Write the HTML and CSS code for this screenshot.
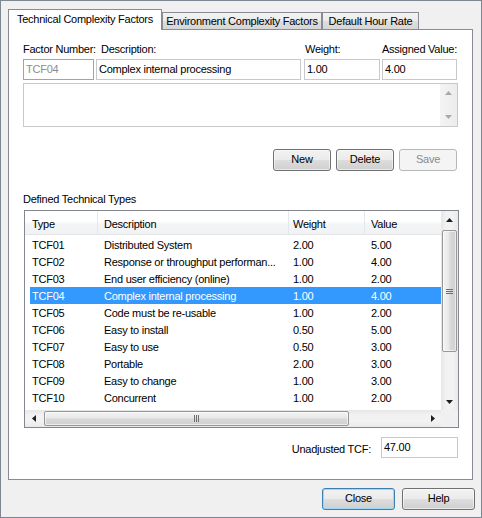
FILE: index.html
```html
<!DOCTYPE html>
<html>
<head>
<meta charset="utf-8">
<link rel="stylesheet" href="styles.css">
</head>
<body>
<div class="window">
  <div class="tabs">
    <div class="tab active">Technical Complexity Factors</div>
    <div class="tab env">Environment Complexity Factors</div>
    <div class="tab rate">Default Hour Rate</div>
    <div class="tab-fill"></div>
  </div>
  <div class="panel">
    <div class="field-grid">
      <div class="lbl">Factor Number:</div>
      <div class="lbl lbl-desc">Description:</div>
      <div class="lbl lbl-weight">Weight:</div>
      <div class="lbl">Assigned Value:</div>
      <div class="input readonly">TCF04</div>
      <div class="input">Complex internal processing</div>
      <div class="input">1.00</div>
      <div class="input">4.00</div>
    </div>
    <div class="memo">
      <div class="memo-body"></div>
      <div class="memo-scroll">
        <svg width="7" height="4" viewBox="0 0 7 4"><polygon points="0,4 3.5,0 7,4" fill="#a9a9a9"/></svg>
        <svg width="7" height="4" viewBox="0 0 7 4"><polygon points="0,0 7,0 3.5,4" fill="#a9a9a9"/></svg>
      </div>
    </div>
    <div class="btn-row">
      <div class="btn">New</div>
      <div class="btn">Delete</div>
      <div class="btn disabled">Save</div>
    </div>
    <div class="section-label">Defined Technical Types</div>
    <div class="list">
      <div class="list-content">
        <div class="list-header">
          <div class="hcell c1">Type</div>
          <div class="hcell c2">Description</div>
          <div class="hcell c3">Weight</div>
          <div class="hcell c4">Value</div>
        </div>
        <div class="rows">
          <div class="row"><div class="cell r1">TCF01</div><div class="cell r2">Distributed System</div><div class="cell r3">2.00</div><div class="cell r4">5.00</div></div>
          <div class="row"><div class="cell r1">TCF02</div><div class="cell r2">Response or throughput performan...</div><div class="cell r3">1.00</div><div class="cell r4">4.00</div></div>
          <div class="row"><div class="cell r1">TCF03</div><div class="cell r2">End user efficiency (online)</div><div class="cell r3">1.00</div><div class="cell r4">2.00</div></div>
          <div class="row selected"><div class="cell r1">TCF04</div><div class="cell r2">Complex internal processing</div><div class="cell r3">1.00</div><div class="cell r4">4.00</div></div>
          <div class="row"><div class="cell r1">TCF05</div><div class="cell r2">Code must be re-usable</div><div class="cell r3">1.00</div><div class="cell r4">2.00</div></div>
          <div class="row"><div class="cell r1">TCF06</div><div class="cell r2">Easy to install</div><div class="cell r3">0.50</div><div class="cell r4">5.00</div></div>
          <div class="row"><div class="cell r1">TCF07</div><div class="cell r2">Easy to use</div><div class="cell r3">0.50</div><div class="cell r4">3.00</div></div>
          <div class="row"><div class="cell r1">TCF08</div><div class="cell r2">Portable</div><div class="cell r3">2.00</div><div class="cell r4">3.00</div></div>
          <div class="row"><div class="cell r1">TCF09</div><div class="cell r2">Easy to change</div><div class="cell r3">1.00</div><div class="cell r4">3.00</div></div>
          <div class="row"><div class="cell r1">TCF10</div><div class="cell r2">Concurrent</div><div class="cell r3">1.00</div><div class="cell r4">2.00</div></div>
        </div>
      </div>
      <div class="vscroll">
        <div class="sb-btn"><svg width="7" height="4" viewBox="0 0 7 4"><polygon points="0,4 3.5,0 7,4" fill="#1e1e1e"/></svg></div>
        <div class="vtrack"><div class="vthumb"><svg width="7" height="5" viewBox="0 0 7 5"><path d="M0 0.5H7M0 2.5H7M0 4.5H7" stroke="#6e6e6e" stroke-width="1"/></svg></div></div>
        <div class="sb-btn"><svg width="7" height="4" viewBox="0 0 7 4"><polygon points="0,0 7,0 3.5,4" fill="#1e1e1e"/></svg></div>
      </div>
      <div class="hscroll">
        <div class="sb-btn"><svg width="4" height="7" viewBox="0 0 4 7"><polygon points="4,0 4,7 0,3.5" fill="#1e1e1e"/></svg></div>
        <div class="htrack"><div class="hthumb"><svg width="5" height="7" viewBox="0 0 5 7"><path d="M0.5 0V7M2.5 0V7M4.5 0V7" stroke="#6e6e6e" stroke-width="1"/></svg></div></div>
        <div class="sb-btn"><svg width="4" height="7" viewBox="0 0 4 7"><polygon points="0,0 0,7 4,3.5" fill="#1e1e1e"/></svg></div>
      </div>
      <div class="corner"></div>
    </div>
    <div class="total-row">
      <div class="total-label">Unadjusted TCF:</div>
      <div class="input total">47.00</div>
    </div>
  </div>
  <div class="dialog-buttons">
    <div class="btn big default">Close</div>
    <div class="btn big">Help</div>
  </div>
</div>
</body>
</html>
```
FILE: styles.css
```css
html, body {
  margin: 0;
  padding: 0;
}
body {
  font-family: "Liberation Sans", Arial, sans-serif;
  font-size: 11px;
  letter-spacing: -0.25px;
  color: #000;
  background: #f0f0f0;
}
.window {
  box-sizing: border-box;
  width: 482px;
  height: 518px;
  border: 1px solid #7d8791;
  background: #f0f0f0;
  padding: 8px 8px 0 7px;
  display: flex;
  flex-direction: column;
}
.tabs {
  display: flex;
  align-items: flex-end;
  height: 21px;
}
.tab {
  box-sizing: border-box;
  white-space: nowrap;
  line-height: 13px;
  text-align: center;
}
.tab.active {
  width: 154px;
  height: 21px;
  border: 1px solid #898c95;
  border-bottom: 0;
  background: #fff;
  padding-top: 3px;
}
.tab.env, .tab.rate {
  height: 18px;
  border: 1px solid #898c95;
  background: linear-gradient(#f3f3f3 0%, #ebebeb 50%, #dedede 51%, #d6d6d6 100%);
  padding-top: 2px;
}
.tab.env { width: 160px; }
.tab.rate { width: 97px; }
.tab-fill {
  flex: 1;
  height: 1px;
  background: #898c95;
}
.panel {
  box-sizing: border-box;
  height: 450px;
  border: 1px solid #898c95;
  border-top: 0;
  background: #fff;
  padding: 12px 14px 0 14px;
  display: flex;
  flex-direction: column;
}
.field-grid {
  display: grid;
  grid-template-columns: 71px 206px 76px 75px;
  grid-template-rows: 13px 21px;
  column-gap: 2px;
  row-gap: 4px;
}
.field-grid > :nth-child(2), .field-grid > :nth-child(6) { margin-right: 1px; }
.lbl {
  line-height: 13px;
  padding-top: 1px;
  white-space: nowrap;
}
.lbl-desc { padding-left: 5px; }
.lbl-weight { padding-left: 1px; }
.input {
  box-sizing: border-box;
  height: 21px;
  border: 1px solid #c7c9cd;
  background: #fff;
  padding-left: 2px;
  line-height: 19px;
  white-space: nowrap;
  overflow: hidden;
}
.input.readonly {
  border-color: #a3a3a3;
  color: #8d8d8d;
}
.memo {
  box-sizing: border-box;
  margin-top: 3px;
  height: 44px;
  border: 1px solid #c7c9cd;
  display: flex;
}
.memo-body { flex: 1; }
.memo-scroll {
  width: 17px;
  background: linear-gradient(to right, #f4f4f4, #ececec);
  display: flex;
  flex-direction: column;
  align-items: center;
  justify-content: space-between;
  padding: 7px 0 7px;
}
.btn-row {
  margin-top: 22px;
  display: flex;
  justify-content: flex-end;
  gap: 5px;
  margin-right: 1px;
}
.btn {
  box-sizing: border-box;
  width: 58px;
  height: 22px;
  border: 1px solid #707070;
  border-radius: 3px;
  background: linear-gradient(#f2f2f2 0%, #ebebeb 50%, #dddddd 51%, #cfcfcf 100%);
  box-shadow: inset 0 0 0 1px rgba(255,255,255,0.55);
  text-align: center;
  line-height: 19px;
}
.btn.disabled {
  border-color: #b5b8bb;
  background: #f4f4f4;
  color: #8a8a8a;
  box-shadow: none;
}
.section-label {
  margin-top: 22px;
  line-height: 13px;
  margin-bottom: 4px;
}
.list {
  box-sizing: border-box;
  width: 435px;
  height: 218px;
  margin-left: 1px;
  border: 1px solid #828790;
  display: grid;
  grid-template-columns: 416px 17px;
  grid-template-rows: 199px 17px;
  background: #fff;
}
.list-content {
  overflow: hidden;
}
.list-header {
  display: flex;
  height: 24px;
  background: linear-gradient(#ffffff 0%, #ffffff 45%, #f4f5f7 55%, #f1f2f4 100%);
  border-bottom: 1px solid #e5e5e5;
  box-sizing: border-box;
}
.hcell {
  box-sizing: border-box;
  line-height: 23px;
  padding-top: 2px;
  border-right: 1px solid #e3e8ee;
  white-space: nowrap;
}
.hcell.c1 { width: 73px; padding-left: 7px; }
.hcell.c2 { width: 191px; padding-left: 6px; }
.hcell.c3 { width: 76px; padding-left: 4px; }
.hcell.c4 { width: 76px; padding-left: 6px; border-right: 0; }
.rows { padding-top: 1px; }
.row {
  display: flex;
  margin-left: 5px;
  width: 411px;
  height: 17px;
  line-height: 17px;
}
.row.selected {
  background: #3399ff;
  color: #fff;
}
.cell { box-sizing: border-box; white-space: nowrap; overflow: hidden; padding-top: 1px; height: 17px; line-height: 16px; }
.cell.r1 { width: 68px; padding-left: 2px; }
.cell.r2 { width: 191px; padding-left: 6px; }
.cell.r3 { width: 76px; padding-left: 4px; }
.cell.r4 { width: 76px; padding-left: 6px; }
.vscroll {
  display: flex;
  flex-direction: column;
  background: linear-gradient(to right, #e6e6e6, #f2f2f2 30%, #f2f2f2 70%, #e9e9e9);
}
.sb-btn {
  width: 17px;
  height: 17px;
  display: flex;
  align-items: center;
  justify-content: center;
  flex: none;
}
.vtrack {
  flex: 1;
  padding-top: 2px;
}
.vthumb {
  box-sizing: border-box;
  margin-left: 1px;
  width: 15px;
  height: 122px;
  border: 1px solid #979797;
  border-radius: 2px;
  background: linear-gradient(to right, #f4f4f4 0%, #e8e8e8 45%, #d9d9d9 55%, #cfcfcf 100%);
  box-shadow: inset 0 0 0 1px rgba(255,255,255,0.6);
  display: flex;
  align-items: center;
  justify-content: center;
}
.hscroll {
  display: flex;
  background: linear-gradient(#e6e6e6, #f2f2f2 30%, #f2f2f2 70%, #e9e9e9);
}
.htrack {
  flex: 1;
  padding-left: 2px;
  display: flex;
  align-items: center;
}
.hthumb {
  box-sizing: border-box;
  width: 305px;
  height: 15px;
  border: 1px solid #979797;
  border-radius: 2px;
  background: linear-gradient(#f4f4f4 0%, #e8e8e8 45%, #d9d9d9 55%, #cfcfcf 100%);
  box-shadow: inset 0 0 0 1px rgba(255,255,255,0.6);
  display: flex;
  align-items: center;
  justify-content: center;
}
.corner { background: #f0f0f0; }
.total-row {
  margin-top: 9px;
  display: flex;
  justify-content: flex-end;
  align-items: center;
  gap: 10px;
}
.total-label { line-height: 13px; padding-top: 4px; }
.input.total { width: 77px; }
.dialog-buttons {
  margin-top: 8px;
  display: flex;
  justify-content: flex-end;
  gap: 7px;
  margin-right: -2px;
}
.btn.big { width: 73px; }
.btn.default {
  border-color: #3c7fb1;
  box-shadow: inset 0 0 0 1px #9fd6f5;
}
```
